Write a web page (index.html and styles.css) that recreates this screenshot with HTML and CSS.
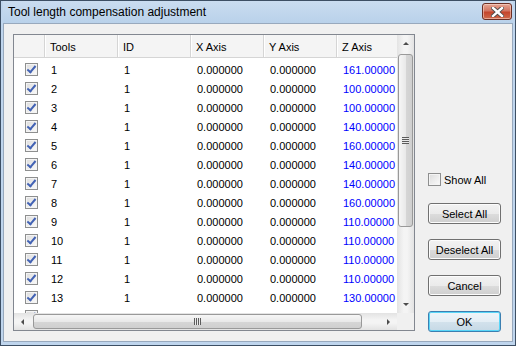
FILE: index.html
```html
<!DOCTYPE html>
<html lang="en">
<head>
    <meta charset="UTF-8">
    <title>Tool length compensation adjustment</title>
    <link rel="stylesheet" href="styles.css">
</head>
<body>
<div class="window">
    <div class="titlebar">
        <span class="title">Tool length compensation adjustment</span>
        <span class="close">
            <svg width="13" height="10" viewBox="0 0 13 10">
                <path d="M2 1 L11 9 M11 1 L2 9" stroke="#4a4a4a" stroke-width="4.2" stroke-linecap="square"/>
                <path d="M2 1 L11 9 M11 1 L2 9" stroke="#fff" stroke-width="2.4" stroke-linecap="square"/>
            </svg>
        </span>
    </div>

    <div class="client">
        <!-- tool list -->
        <div class="grid">
            <div class="viewport">
                <div class="row head">
                    <span class="c0"></span>
                    <span class="c">Tools</span>
                    <span class="c">ID</span>
                    <span class="c">X Axis</span>
                    <span class="c">Y Axis</span>
                    <span class="c">Z Axis</span>
                </div>
                <div class="rows">
                    <div class="row"><span class="c0"><i class="chk on"></i></span><span class="c">1</span><span class="c">1</span><span class="c">0.000000</span><span class="c">0.000000</span><span class="c z">161.00000</span></div>
                    <div class="row"><span class="c0"><i class="chk on"></i></span><span class="c">2</span><span class="c">1</span><span class="c">0.000000</span><span class="c">0.000000</span><span class="c z">100.00000</span></div>
                    <div class="row"><span class="c0"><i class="chk on"></i></span><span class="c">3</span><span class="c">1</span><span class="c">0.000000</span><span class="c">0.000000</span><span class="c z">100.00000</span></div>
                    <div class="row"><span class="c0"><i class="chk on"></i></span><span class="c">4</span><span class="c">1</span><span class="c">0.000000</span><span class="c">0.000000</span><span class="c z">140.00000</span></div>
                    <div class="row"><span class="c0"><i class="chk on"></i></span><span class="c">5</span><span class="c">1</span><span class="c">0.000000</span><span class="c">0.000000</span><span class="c z">160.00000</span></div>
                    <div class="row"><span class="c0"><i class="chk on"></i></span><span class="c">6</span><span class="c">1</span><span class="c">0.000000</span><span class="c">0.000000</span><span class="c z">140.00000</span></div>
                    <div class="row"><span class="c0"><i class="chk on"></i></span><span class="c">7</span><span class="c">1</span><span class="c">0.000000</span><span class="c">0.000000</span><span class="c z">140.00000</span></div>
                    <div class="row"><span class="c0"><i class="chk on"></i></span><span class="c">8</span><span class="c">1</span><span class="c">0.000000</span><span class="c">0.000000</span><span class="c z">160.00000</span></div>
                    <div class="row"><span class="c0"><i class="chk on"></i></span><span class="c">9</span><span class="c">1</span><span class="c">0.000000</span><span class="c">0.000000</span><span class="c z">110.00000</span></div>
                    <div class="row"><span class="c0"><i class="chk on"></i></span><span class="c">10</span><span class="c">1</span><span class="c">0.000000</span><span class="c">0.000000</span><span class="c z">110.00000</span></div>
                    <div class="row"><span class="c0"><i class="chk on"></i></span><span class="c">11</span><span class="c">1</span><span class="c">0.000000</span><span class="c">0.000000</span><span class="c z">110.00000</span></div>
                    <div class="row"><span class="c0"><i class="chk on"></i></span><span class="c">12</span><span class="c">1</span><span class="c">0.000000</span><span class="c">0.000000</span><span class="c z">110.00000</span></div>
                    <div class="row"><span class="c0"><i class="chk on"></i></span><span class="c">13</span><span class="c">1</span><span class="c">0.000000</span><span class="c">0.000000</span><span class="c z">130.00000</span></div>
                    <!-- next row, only its checkbox top shows above the scrollbar -->
                    <div class="row"><span class="c0"><i class="chk on"></i></span></div>
                </div>
            </div>

            <div class="vscroll">
                <span class="sbtn"><i class="arr up"></i></span>
                <span class="track">
                    <span class="thumb"><i class="grip"></i></span>
                </span>
                <span class="sbtn"><i class="arr down"></i></span>
            </div>
            <div class="hscroll">
                <span class="sbtn"><i class="arr left"></i></span>
                <span class="track">
                    <span class="thumb"><i class="grip"></i></span>
                </span>
                <span class="sbtn"><i class="arr right"></i></span>
            </div>
            <div class="corner"></div>
        </div>

        <!-- buttons -->
        <div class="side">
            <label class="showall"><i class="chk"></i>Show All</label>
            <button class="btn">Select All</button>
            <button class="btn">Deselect All</button>
            <button class="btn">Cancel</button>
            <button class="btn default">OK</button>
        </div>
    </div>
</div>
</body>
</html>
```

FILE: styles.css
```css
* {
    box-sizing: border-box;
}
body {
    margin: 0;
    font-family: "Liberation Sans", Arial, sans-serif;
    font-size: 11px;
    color: #000;
}
.window {
    width: 516px;
    height: 346px;
    border: 1px solid #3d4f64;
    background: #bfd5ed;
    padding: 0 2px 3px 2px;
    display: flex;
    flex-direction: column;
}
.titlebar {
    height: 22px;
    display: flex;
    align-items: flex-start;
    padding-left: 5px;
    background: linear-gradient(#cadcf0, #b9d1ea);
}
.title {
    font-size: 12px;
    line-height: 14px;
    margin-top: 4px;
}
.close {
    margin-left: auto;
    margin-top: 2px;
    margin-right: 1px;
    width: 30px;
    height: 17px;
    border: 1px solid #6b2e24;
    border-radius: 3px;
    background: linear-gradient(#e6a593 0%, #d27562 45%, #c4452c 55%, #cf6a4c 100%);
    box-shadow: inset 0 0 0 1px rgba(255, 230, 220, 0.5);
    display: flex;
    align-items: center;
    justify-content: center;
}
.close svg {
    display: block;
}
.client {
    flex: 1;
    border: 1px solid #98a9bd;
    background: #f0f0f0;
    display: flex;
    gap: 13px;
    padding: 10px 9px 9px 9px;
}

/* list view */
.grid {
    width: 402px;
    height: 297px;
    border: 1px solid #828790;
    background: #fff;
    display: grid;
    grid-template-columns: 1fr 17px;
    grid-template-rows: 1fr 17px;
}
.viewport {
    overflow: hidden;
}
.row {
    display: flex;
    height: 19px;
    line-height: 19px;
    white-space: nowrap;
}
.c0 {
    width: 31px;
    flex-shrink: 0;
    padding-left: 11px;
    padding-top: 2px;
}
.c {
    width: 73px;
    flex-shrink: 0;
    padding-left: 6px;
}
.z {
    color: #0000ff;
}
.head {
    height: 23px;
    padding-top: 3px;
    background: #f4f4f4;
    border-bottom: 1px solid #d5d5d5;
}
.head .c, .head .c0 {
    border-right: 1px solid #d5d5d5;
    box-shadow: 1px 0 0 #fff;
    margin-top: -3px;
    padding-top: 3px;
    height: 22px;
}
.head .c {
    padding-left: 5px;
}
.rows {
    padding-top: 3px;
}
.chk {
    display: block;
    position: relative;
    width: 13px;
    height: 13px;
    border: 1px solid #8e8f8f;
    background: linear-gradient(135deg, #dcdcdc, #fbfbfb);
    box-shadow: inset 0 0 0 1px #f4f4f4;
}
.chk.on::after {
    content: "";
    position: absolute;
    left: 3px;
    top: 0px;
    width: 3px;
    height: 7px;
    border-right: 2px solid #4262b4;
    border-bottom: 2px solid #4262b4;
    transform: rotate(40deg);
}

/* scrollbars */
.vscroll, .hscroll {
    display: flex;
    background: linear-gradient(90deg, #e3e3e3, #f4f4f4 40%, #f4f4f4 60%, #e3e3e3);
}
.vscroll {
    flex-direction: column;
}
.hscroll {
    background: linear-gradient(#e3e3e3, #f4f4f4 40%, #f4f4f4 60%, #e3e3e3);
}
.sbtn {
    width: 17px;
    height: 17px;
    flex-shrink: 0;
    display: flex;
    align-items: center;
    justify-content: center;
}
.track {
    flex: 1;
    display: flex;
}
.vscroll .track {
    flex-direction: column;
    padding: 2px 1px 0 1px;
}
.hscroll .track {
    padding: 1px 0 1px 2px;
}
.thumb {
    display: flex;
    align-items: center;
    justify-content: center;
    border: 1px solid #999;
    border-radius: 3px;
}
.vscroll .thumb {
    height: 173px;
    background: linear-gradient(90deg, #f6f6f6, #e9e9e9 50%, #d6d6d6 51%, #cfcfcf);
}
.hscroll .thumb {
    width: 329px;
    background: linear-gradient(#f6f6f6, #e9e9e9 50%, #d6d6d6 51%, #cfcfcf);
}
.grip {
    display: block;
}
.vscroll .grip {
    width: 7px;
    height: 7px;
    background: repeating-linear-gradient(#5c5c5c 0 1px, #e9e9e9 1px 2px);
}
.hscroll .grip {
    width: 7px;
    height: 7px;
    background: repeating-linear-gradient(90deg, #5c5c5c 0 1px, #e9e9e9 1px 2px);
}
.arr {
    display: block;
    width: 0;
    height: 0;
    border: 3px solid transparent;
}
.arr.up {
    border-bottom: 3px solid #4d4d4d;
    border-top-width: 0;
}
.arr.down {
    border-top: 3px solid #4d4d4d;
    border-bottom-width: 0;
}
.arr.left {
    border-right: 3px solid #4d4d4d;
    border-left-width: 0;
}
.arr.right {
    border-left: 3px solid #4d4d4d;
    border-right-width: 0;
}
.corner {
    background: #f0f0f0;
}

/* right column */
.side {
    width: 73px;
    display: flex;
    flex-direction: column;
    justify-content: flex-end;
    gap: 15px;
}
.showall {
    display: flex;
    align-items: center;
    gap: 3px;
    margin-right: -10px;
    margin-bottom: 2px;
}
.btn {
    display: block;
    width: 73px;
    height: 21px;
    padding: 0;
    font-family: "Liberation Sans", Arial, sans-serif;
    font-size: 11px;
    color: #000;
    border: 1px solid #707070;
    border-radius: 3px;
    background: linear-gradient(#f2f2f2 0%, #ebebeb 50%, #dddddd 51%, #cfcfcf 100%);
    box-shadow: inset 0 0 0 1px #fcfcfc;
}
.btn.default {
    border-color: #3c7fb1;
    box-shadow: inset 0 0 0 1px #58d6f8;
    background: linear-gradient(#eef5f9 0%, #e4eef5 50%, #d3e2ec 51%, #c6d9e6 100%);
}
```
